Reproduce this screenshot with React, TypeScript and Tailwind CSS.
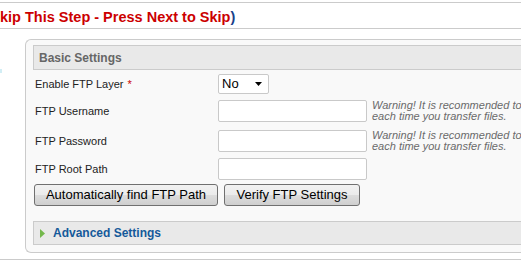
import React from "react";

function FieldRow({
  label,
  height,
  warning = false,
}: {
  label: string;
  height: string;
  warning?: boolean;
}) {
  return (
    <div className={`flex items-start ${height}`}>
      <div className="w-[185px] flex-none h-[22px] pl-[2px] flex items-center text-[11px] text-[#222]">{label}</div>
      <input
        type="text"
        className="w-[149px] h-[22px] bg-white border border-[#c9c9c9] rounded-[2px] outline-none flex-none"
      />
      {warning && (
        <div className="ml-[5px] flex-none italic text-[11px] leading-[11px] text-[#6a6a6a] whitespace-nowrap">
          Warning! It is recommended to
          <br />
          each time you transfer files.
        </div>
      )}
    </div>
  );
}

export default function App() {
  return (
    <div className="w-[521px] h-[267px] overflow-hidden bg-white font-['Liberation_Sans',Arial,sans-serif]">
      <div className="h-[2px]" />
      <div className="border-t border-[#cbcbcb]" />
      <div className="h-[25px] pt-[6px] leading-[17px] text-[14.5px] font-bold whitespace-nowrap">
        <span className="text-[#cc0000]">kip This Step - Press Next to Skip</span>
        <span className="text-[#1a3f8a]">)</span>
      </div>
      <div className="border-t border-[#cbcbcb]" />
      <div className="h-[10px]" />

      <div className="flex">
        <div className="w-[25px] flex-none">
          <div className="w-[2px] h-[4px] mt-[30px] bg-[#d2eef5]" />
        </div>
        <div className="w-[560px] flex-none border border-r-0 border-[#cbcbcb] rounded-l-[6px] bg-[#f9f9f9] pt-[5px] pl-[7px] pb-[7px]">
          {/* Basic settings header */}
          <div className="h-[25px] border border-r-0 border-[#cbcbcb] bg-[#e9e9e9] pl-[5px] flex items-center text-[12px] font-bold text-[#666]">
            Basic Settings
          </div>

          <div className="mt-[4px]">
            <div className="flex items-start h-[26px]">
              <div className="w-[185px] flex-none h-[20px] pl-[2px] flex items-center text-[11px] text-[#222]">
                Enable FTP Layer <span className="text-[#cc0000] ml-[4px]">*</span>
              </div>
              <div className="w-[51px] flex-none h-[20px] bg-white border border-[#c9c9c9] rounded-[2px] flex items-center pl-[3px] pr-[6px] text-[13px] text-black">
                <span className="flex-1">No</span>
                <svg width="7" height="4" viewBox="0 0 7 4">
                  <path d="M0 0h7L3.5 4z" fill="#000" />
                </svg>
              </div>
            </div>
            <FieldRow label="FTP Username" height="h-[30px]" warning />
            <FieldRow label="FTP Password" height="h-[28px]" warning />
            <FieldRow label="FTP Root Path" height="h-[26px]" />

            <div className="flex gap-[6px] pl-[1px]">
              <button className="w-[184px] h-[22px] border border-[#707070] rounded-[3px] bg-[linear-gradient(#f2f2f2_0%,#ebebeb_50%,#dddddd_50%,#cfcfcf_100%)] text-[13px] text-black">
                Automatically find FTP Path
              </button>
              <button className="w-[136px] h-[22px] border border-[#707070] rounded-[3px] bg-[linear-gradient(#f2f2f2_0%,#ebebeb_50%,#dddddd_50%,#cfcfcf_100%)] text-[13px] text-black">
                Verify FTP Settings
              </button>
            </div>
          </div>

          {/* Advanced settings header */}
          <div className="mt-[15px] h-[24px] border border-r-0 border-[#cbcbcb] bg-[#e9e9e9] pl-[6px] flex items-center gap-[8px]">
            <svg width="5" height="9" viewBox="0 0 5 9">
              <path d="M0 0L5 4.5L0 9z" fill="#74b84c" />
            </svg>
            <span className="text-[12px] font-bold text-[#15599a]">Advanced Settings</span>
          </div>
        </div>
      </div>

      <div className="h-[6px]" />
      <div className="border-t border-[#cbcbcb]" />
    </div>
  );
}
